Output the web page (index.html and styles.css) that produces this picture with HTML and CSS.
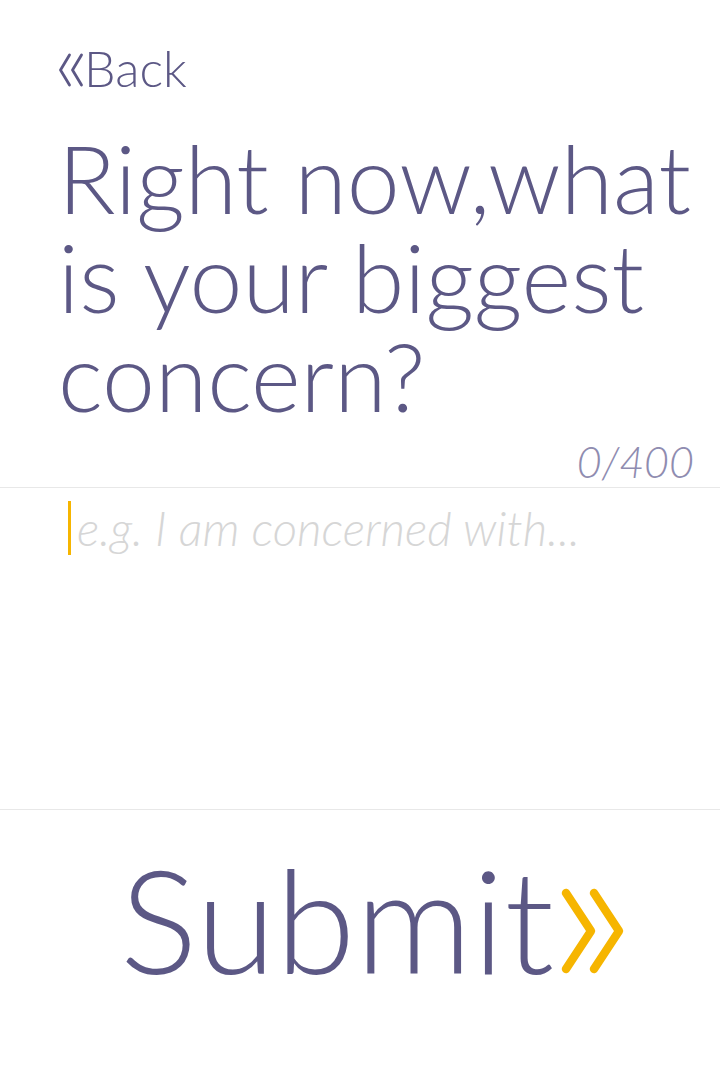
FILE: index.html
```html
<!DOCTYPE html>
<html>
<head>
<meta charset="utf-8">
<link rel="stylesheet" href="styles.css">
</head>
<body>
<div class="page">
  <div class="back"><svg class="back-chev" width="26" height="36" viewBox="0 0 26 36"><polyline points="11.5,2 2.5,17 11.5,32" fill="none" stroke="#5c5885" stroke-width="2.8" stroke-linecap="round" stroke-linejoin="round"/><polyline points="23.5,2 14.5,17 23.5,32" fill="none" stroke="#5c5885" stroke-width="2.8" stroke-linecap="round" stroke-linejoin="round"/></svg><span class="back-text">Back</span></div>
  <h1 class="question">Right now,what is your biggest concern?</h1>
  <div class="counter">0/400</div>
  <div class="answer">
    <div class="placeholder"><span class="caret"></span><span class="ph-text">e.g. I am concerned with...</span></div>
  </div>
  <div class="submit-area">
    <div class="submit"><span class="submit-text">Submit</span><svg class="chev" width="66" height="90" viewBox="0 0 66 90"><polyline points="6,6 31,44 6,82" fill="none" stroke="#f6b500" stroke-width="8.5" stroke-linecap="round" stroke-linejoin="round"/><polyline points="34,6 59,44 34,82" fill="none" stroke="#f6b500" stroke-width="8.5" stroke-linecap="round" stroke-linejoin="round"/></svg></div>
  </div>
</div>
</body>
</html>
```
FILE: styles.css
```css
html, body {
  margin: 0;
  padding: 0;
  background: #ffffff;
}
body {
  font-family: "Lato", "Noto Sans", sans-serif;
  font-weight: 300;
  color: #5c5885;
  width: 720px;
  height: 1080px;
  overflow: hidden;
}
.page {
  display: flex;
  flex-direction: column;
}
.back {
  display: flex;
  align-items: flex-end;
  font-size: 50px;
  line-height: 50px;
  padding: 43px 0 0 58px;
  height: 50px;
}
.back-chev {
  margin-bottom: 4px;
  margin-right: 0;
}
.question {
  margin: 35px 0 0 0;
  padding: 0 0 0 58px;
  font-size: 95px;
  line-height: 99px;
  font-weight: 300;
  letter-spacing: 0;
}
.counter {
  margin-top: 15px;
  text-align: right;
  padding-right: 26px;
  font-size: 43px;
  line-height: 44px;
  height: 48px;
  font-style: italic;
  color: #8f8cb0;
  border-bottom: 1px solid #e8e8e8;
  box-sizing: border-box;
}
.answer {
  height: 322px;
  border-bottom: 1px solid #e8e8e8;
  box-sizing: border-box;
  padding-top: 13px;
}
.placeholder {
  display: flex;
  align-items: center;
  padding-left: 68px;
  font-size: 47.5px;
  line-height: 54px;
  font-style: italic;
  color: #d6d6d6;
}
.caret {
  width: 3px;
  height: 54px;
  background: #f6b500;
  margin-right: 6px;
}
.submit-area {
  padding-top: 36px;
}
.submit {
  display: flex;
  align-items: flex-end;
  padding-left: 120px;
  font-size: 145px;
  line-height: 145px;
}
.chev {
  margin-left: 6px;
  margin-bottom: 14px;
}
```
